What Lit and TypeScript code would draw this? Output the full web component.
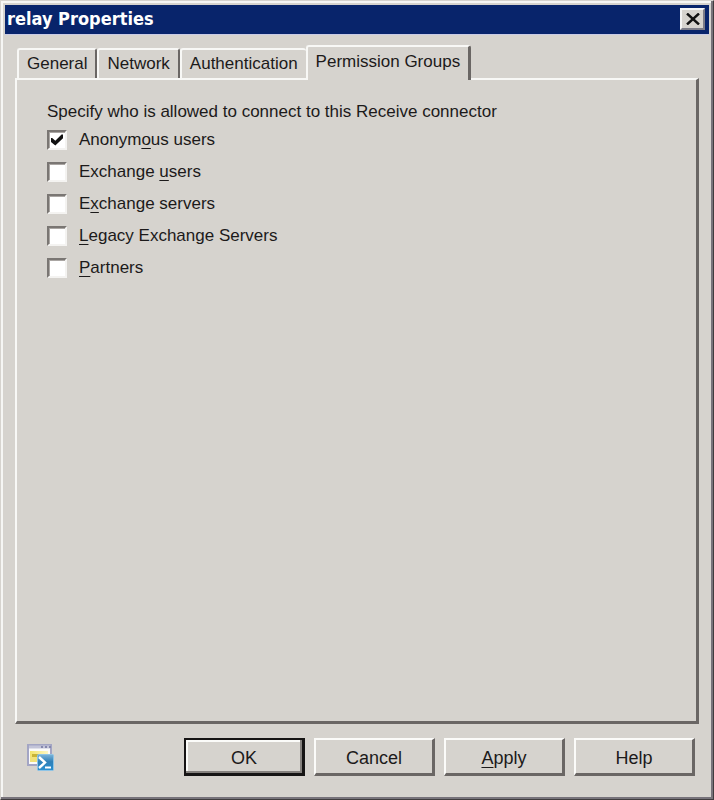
import { LitElement, html, css, svg } from "lit";
import { customElement, state } from "lit/decorators.js";

interface Group {
  id: string;
  before: string;
  key: string;
  after: string;
  checked: boolean;
}

const TABS = ["General", "Network", "Authentication", "Permission Groups"];

const closeIcon = svg`<svg class="close-icon" width="14" height="12" viewBox="0 0 14 12" aria-hidden="true">
  <path d="M1 0.5L13 11.5M13 0.5L1 11.5" stroke="#111" stroke-width="2.4" fill="none"/>
</svg>`;

const shellIcon = svg`<svg width="28" height="28" viewBox="0 0 28 28" aria-hidden="true">
  <defs>
    <linearGradient id="blue" x1="0" y1="0" x2="0" y2="1">
      <stop offset="0" stop-color="#7db4d8"/><stop offset="0.45" stop-color="#2f80b8"/><stop offset="1" stop-color="#2a8fd0"/>
    </linearGradient>
    <linearGradient id="gold" x1="0" y1="0" x2="1" y2="0">
      <stop offset="0" stop-color="#f3e36a"/><stop offset="1" stop-color="#fdf7c4"/>
    </linearGradient>
  </defs>
  <rect x="1" y="2" width="23" height="20" fill="#fbfbfb" stroke="#a3a5c4" stroke-width="2"/>
  <path d="M2 4H23" stroke="#c3c4d8" stroke-width="3"/>
  <path d="M14 4H16M18 4H20M22 4H24" stroke="#8688ae" stroke-width="2"/>
  <rect x="3" y="8" width="18" height="5" fill="url(#gold)"/>
  <rect x="3" y="13" width="9" height="6" fill="#f2e27a"/>
  <rect x="5" y="11" width="7" height="3" fill="#c9b436"/>
  <rect x="10.500" y="11.500" width="16" height="16" rx="1" fill="url(#blue)" stroke="#8ec4e6"/>
  <path d="M12 14L18 19.500L12 25" fill="none" stroke="#fff" stroke-width="2.400"/>
  <path d="M18 24.500H24" stroke="#fff" stroke-width="2"/>
</svg>`;

@customElement("app-root")
export class AppRoot extends LitElement {
  @state() private active = 3;

  @state() private groups: Group[] = [
    { id: "anonymous", before: "Anonym", key: "o", after: "us users", checked: true },
    { id: "users", before: "Exchange ", key: "u", after: "sers", checked: false },
    { id: "servers", before: "E", key: "x", after: "change servers", checked: false },
    { id: "legacy", before: "", key: "L", after: "egacy Exchange Servers", checked: false },
    { id: "partners", before: "", key: "P", after: "artners", checked: false },
  ];

  static styles = css`
    :host {
      display: block;
      font-family: "Liberation Sans", Arial, sans-serif;
      font-size: 17px;
      line-height: 24px;
      color: #1c1a1a;
    }
    * {
      box-sizing: border-box;
    }
    button {
      font: inherit;
      color: inherit;
      margin: 0;
      padding: 0;
      background: #d6d3ce;
    }
    u {
      text-decoration-thickness: 1px;
      text-underline-offset: 3px;
      text-decoration-skip-ink: none;
    }
    .window {
      display: flex;
      flex-direction: column;
      min-height: 100vh;
      background: #d6d3ce;
      border: 1px solid;
      border-color: #d6d3ce #403c3e #403c3e #d6d3ce;
      box-shadow: inset -2px -2px #77737a, inset 2px 2px #f6f6f4;
      padding: 4px;
    }
    .title-bar {
      display: flex;
      align-items: center;
      justify-content: space-between;
      height: 29px;
      padding: 0 4px 2px 2px;
      background: #08246b;
      box-shadow: 0 1px #c9cbe6;
    }
    h1 {
      margin: 0;
      font: bold 18px/24px "DejaVu Sans Condensed", "DejaVu Sans", sans-serif;
      color: #fff;
    }
    .close {
      display: grid;
      place-items: center;
      width: 25px;
      height: 22px;
      border: 2px solid;
      border-color: #f4f4f4 #7c7c88 #7c7c88 #f4f4f4;
    }
    .body {
      display: flex;
      flex-direction: column;
      flex: 1;
      padding: 11px 10px 19px;
    }
    .tabs {
      display: flex;
      align-items: flex-end;
      padding-left: 2px;
    }
    .tab {
      height: 30px;
      padding: 0 8px;
      border: 2px solid;
      border-color: #f8f8f6 #6a6664 transparent #f8f8f6;
      border-bottom: 0;
      border-radius: 3px 3px 0 0;
      white-space: nowrap;
    }
    .tab.before-active {
      border-right-width: 0;
    }
    .tab.active {
      position: relative;
      height: 35px;
      margin-bottom: -2px;
      padding: 0 8px 4px;
      border-right-width: 3px;
    }
    .panel {
      flex: 1;
      border: 2px solid;
      border-color: #f8f8f6 #6a6664 #6a6664 #f8f8f6;
      border-right-width: 3px;
      border-bottom-width: 3px;
      padding: 20px 30px;
    }
    fieldset {
      margin: 0;
      padding: 0;
      border: 0;
      min-width: 0;
    }
    legend {
      padding: 0;
    }
    .option {
      display: flex;
      align-items: center;
      gap: 12px;
      height: 32px;
    }
    .box {
      appearance: none;
      display: grid;
      place-items: center;
      width: 20px;
      height: 20px;
      margin: 0;
      background: #fff;
      border: 2px solid;
      border-color: #7a7673 #f4f3f1 #f4f3f1 #7a7673;
      box-shadow: inset 1px 1px #aaa6a3;
    }
    .box:checked::before {
      content: "";
      width: 12px;
      height: 12px;
      background: #111;
      clip-path: polygon(0 34%, 10% 34%, 36% 56%, 88% 4%, 100% 4%, 100% 36%, 36% 96%, 0 66%);
    }
    .footer {
      display: flex;
      align-items: center;
      gap: 9px;
      padding: 14px 4px 0 12px;
    }
    .shell {
      display: flex;
      margin-right: auto;
      border: 0;
    }
    .action {
      width: 121px;
      height: 38px;
      padding-top: 2px;
      font-size: 18px;
      border: 2px solid;
      border-color: #fbfbf9 #6a6664 #6a6664 #fbfbf9;
      border-right-width: 3px;
      border-bottom-width: 3px;
    }
    .action.default {
      border: 2px solid #161414;
      border-right-width: 3px;
      border-bottom-width: 3px;
      box-shadow: inset -2px -2px #85817e, inset 2px 2px #fbfbf9;
    }
  `;

  private toggle(id: string) {
    this.groups = this.groups.map((g) => (g.id === id ? { ...g, checked: !g.checked } : g));
  }

  private tabClass(i: number) {
    if (i === this.active) return "tab active";
    return i === this.active - 1 ? "tab before-active" : "tab";
  }

  render() {
    return html`
      <main class="window">
        <header class="title-bar">
          <h1>relay Properties</h1>
          <button class="close" aria-label="Close">${closeIcon}</button>
        </header>
        <div class="body">
          <div class="tabs" role="tablist">
            ${TABS.map(
              (name, i) => html`<button
                class=${this.tabClass(i)}
                role="tab"
                aria-selected=${i === this.active}
                @click=${() => (this.active = i)}
              >${name}</button>`
            )}
          </div>
          <section class="panel" role="tabpanel">
            <fieldset>
              <legend>Specify who is allowed to connect to this Receive connector</legend>
              ${this.groups.map(
                (g) => html`<div class="option">
                  <input
                    class="box"
                    type="checkbox"
                    id=${g.id}
                    .checked=${g.checked}
                    @change=${() => this.toggle(g.id)}
                  /><label for=${g.id}>${g.before}<u>${g.key}</u>${g.after}</label>
                </div>`
              )}
            </fieldset>
          </section>
          <footer class="footer">
            <button class="shell" aria-label="View command">${shellIcon}</button>
            <button class="action default">OK</button>
            <button class="action">Cancel</button>
            <button class="action"><u>A</u>pply</button>
            <button class="action">Help</button>
          </footer>
        </div>
      </main>
    `;
  }
}
